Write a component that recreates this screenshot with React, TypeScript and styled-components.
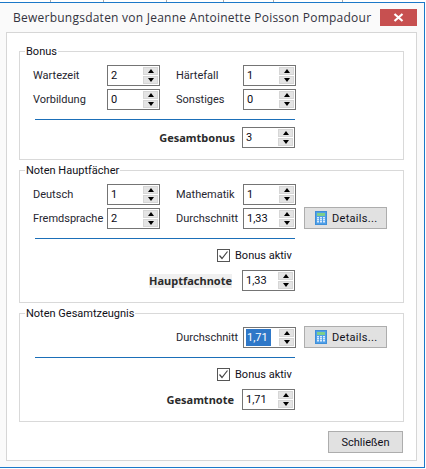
import React from "react";
import styled, { createGlobalStyle } from "styled-components";

const Global = createGlobalStyle`
  html, body { margin: 0; padding: 0; background: #fff; }
  body { font-family: Roboto, "Noto Sans", sans-serif; font-size: 11px; letter-spacing: 0; color: #262630; overflow: hidden; }
`;

const Page = styled.div`
  width: 426px;
  height: 469px;
  background: #fff;
`;

const TopStrip = styled.div`
  display: flex;
  height: 2px;
`;

const StripCell = styled.div<{ $w: number }>`
  width: ${(p) => p.$w}px;
  border-right: 1px solid #a8a8a8;
  box-sizing: border-box;
`;

const Win = styled.div`
  box-sizing: border-box;
  width: 425px;
  height: 466px;
  border-top: 1px solid #1b78c8;
  border-right: 1px solid #1b78c8;
  border-bottom: 1px solid #1b78c8;
  background: #fafafa;
`;

const TitleBar = styled.div`
  height: 29px;
  display: flex;
  align-items: flex-start;
  justify-content: space-between;
  padding: 6px 7px 0 13px;
  box-sizing: border-box;
`;

const Title = styled.div`
  font-family: "Open Sans", "Noto Sans", sans-serif;
  font-size: 12px;
  letter-spacing: 0.24px;
  line-height: 17px;
  color: #333340;
  white-space: nowrap;
`;

const CloseBtn = styled.div`
  flex: none;
  width: 37px;
  height: 17px;
  background: #c75050;
  display: flex;
  align-items: center;
  justify-content: center;
`;

const Panel = styled.div`
  box-sizing: border-box;
  width: 411px;
  height: 429px;
  margin-left: 6px;
  border: 1px solid #d6d6d6;
  background: #fff;
  padding: 18px 0 0 12px;
`;

const Group = styled.section`
  position: relative;
  box-sizing: border-box;
  width: 385px;
  border: 1px solid #d9d9d9;
  padding: 13px 0 11px;
  margin-bottom: 10px;
`;

const Legend = styled.div`
  position: absolute;
  left: 5px;
  top: -8px;
  padding: 0 1px;
  background: #fff;
  line-height: 15px;
  color: #101018;
`;

const Rows = styled.div`
  display: flex;
  flex-direction: column;
  gap: 3px;
`;

const Row = styled.div`
  display: flex;
  align-items: center;
  height: 21px;
  padding-left: 13px;
`;

const FieldLabel = styled.label<{ $w: number; $indent?: number }>`
  width: ${(p) => p.$w}px;
  margin-left: ${(p) => p.$indent ?? 0}px;
  white-space: nowrap;
  line-height: 15px;
`;

const SpinBox = styled.div`
  box-sizing: border-box;
  flex: none;
  width: 53px;
  height: 21px;
  border: 1px solid #747474;
  background: #fff;
  display: flex;
  justify-content: space-between;
  align-items: stretch;
  padding: 1px 1px 1px 2px;
  color: #0a0a14;
`;

const SpinText = styled.span<{ $selected?: boolean }>`
  align-self: center;
  line-height: 17px;
  padding: 0 ${(p) => (p.$selected ? "3px" : "1px")} 0 1px;
  background: ${(p) => (p.$selected ? "#2f78c8" : "transparent")};
  color: ${(p) => (p.$selected ? "#fff" : "inherit")};
`;

const SpinButtons = styled.div`
  display: flex;
  flex-direction: column;
  gap: 1px;
  width: 15px;
`;

const SpinButton = styled.div`
  flex: 1;
  box-sizing: border-box;
  background: #e4e4e4;
  border: 1px solid #d6d6d6;
  display: flex;
  align-items: center;
  justify-content: center;
`;

const Arrow = styled.span<{ $down?: boolean }>`
  width: 0;
  height: 0;
  border-left: 3.5px solid transparent;
  border-right: 3.5px solid transparent;
  ${(p) => (p.$down ? "border-top: 4px solid #000;" : "border-bottom: 4px solid #000;")}
`;

const DetailsButton = styled.button`
  box-sizing: border-box;
  width: 83px;
  height: 22px;
  margin-left: 8px;
  align-self: flex-end;
  border: 1px solid #adadad;
  background: #e1e1e1;
  font: inherit;
  letter-spacing: 0.3px;
  color: #10101a;
  padding: 0 0 0 10px;
  display: flex;
  align-items: center;
  gap: 5px;
`;

const Divider = styled.hr`
  width: 260px;
  height: 1px;
  border: 0;
  margin: 9px 0 0 15px;
  background: #1b6fb8;
`;

const SummaryRow = styled.div<{ $top: number }>`
  display: flex;
  align-items: center;
  justify-content: flex-end;
  width: 275px;
  height: 21px;
  margin-top: ${(p) => p.$top}px;
`;

const SummaryLabel = styled.span<{ $gap: number; $shade?: boolean }>`
  font-family: "Noto Sans", sans-serif;
  font-weight: 700;
  margin-right: ${(p) => p.$gap}px;
  line-height: 14px;
  color: #2b2b2b;
  background: ${(p) => (p.$shade ? "#f0f0f0" : "transparent")};
`;

const CheckRow = styled.div`
  display: flex;
  align-items: center;
  gap: 5px;
  height: 13px;
  margin-top: 10px;
  padding-left: 197px;
  line-height: 13px;
  color: #10101a;
`;

const CheckBox = styled.span`
  box-sizing: border-box;
  width: 13px;
  height: 13px;
  border: 1px solid #555;
  background: #fff;
  display: flex;
  align-items: center;
  justify-content: center;
`;

const Footer = styled.div`
  display: flex;
  justify-content: flex-end;
  width: 384px;
  margin-top: -1px;
`;

const CloseAction = styled.button`
  box-sizing: border-box;
  width: 75px;
  height: 22px;
  border: 1px solid #adadad;
  background: #e1e1e1;
  font: inherit;
  color: #10101a;
  padding: 0;
`;

const Calculator = () => (
  <svg width="12" height="14" viewBox="0 0 12 14">
    <rect x="0.5" y="0.5" width="11" height="13" fill="#4f9fe8" stroke="#3f8fd8" />
    <rect x="2" y="2" width="8" height="3" fill="#7fcf8a" />
    {[6, 8, 10].map((y) =>
      [2, 5, 8].map((x) => <rect key={`${x}-${y}`} x={x} y={y} width="2" height="1.5" fill="#dcecfb" />)
    )}
  </svg>
);

const Spin = ({ value, selected }: { value: string; selected?: boolean }) => (
  <SpinBox>
    <SpinText $selected={selected}>{value}</SpinText>
    <SpinButtons>
      <SpinButton><Arrow /></SpinButton>
      <SpinButton><Arrow $down /></SpinButton>
    </SpinButtons>
  </SpinBox>
);

const Details = () => (
  <DetailsButton>
    <Calculator />
    Details...
  </DetailsButton>
);

const BonusCheck = () => (
  <CheckRow>
    <CheckBox>
      <svg width="11" height="11" viewBox="0 0 11 11">
        <path d="M1.5 5.5 L4 8.5 L9.5 1.5" fill="none" stroke="#444" strokeWidth="1.2" />
      </svg>
    </CheckBox>
    Bonus aktiv
  </CheckRow>
);

export default function App() {
  return (
    <Page>
      <Global />
      <TopStrip>
        {[51, 53, 63, 57, 50, 69].map((w, i) => <StripCell key={i} $w={w} />)}
      </TopStrip>
      <Win>
        <TitleBar>
          <Title>Bewerbungsdaten von Jeanne Antoinette Poisson Pompadour</Title>
          <CloseBtn>
            <svg width="11" height="9" viewBox="0 0 11 9">
              <path d="M1.5 1 L9.5 8 M9.5 1 L1.5 8" stroke="#fff" strokeWidth="2.2" fill="none" />
            </svg>
          </CloseBtn>
        </TitleBar>
        <Panel>
          <Group>
            <Legend>Bonus</Legend>
            <Rows>
              <Row>
                <FieldLabel $w={74}>Wartezeit</FieldLabel>
                <Spin value="2" />
                <FieldLabel $w={67} $indent={16}>Härtefall</FieldLabel>
                <Spin value="1" />
              </Row>
              <Row>
                <FieldLabel $w={74}>Vorbildung</FieldLabel>
                <Spin value="0" />
                <FieldLabel $w={67} $indent={16}>Sonstiges</FieldLabel>
                <Spin value="0" />
              </Row>
            </Rows>
            <Divider />
            <SummaryRow $top={7}>
              <SummaryLabel $gap={7}>Gesamtbonus</SummaryLabel>
              <Spin value="3" />
            </SummaryRow>
          </Group>
          <Group>
            <Legend>Noten Hauptfächer</Legend>
            <Rows>
              <Row>
                <FieldLabel $w={74}>Deutsch</FieldLabel>
                <Spin value="1" />
                <FieldLabel $w={67} $indent={16}>Mathematik</FieldLabel>
                <Spin value="1" />
              </Row>
              <Row>
                <FieldLabel $w={74}>Fremdsprache</FieldLabel>
                <Spin value="2" />
                <FieldLabel $w={67} $indent={16}>Durchschnitt</FieldLabel>
                <Spin value="1,33" />
                <Details />
              </Row>
            </Rows>
            <Divider />
            <BonusCheck />
            <SummaryRow $top={8}>
              <SummaryLabel $gap={10} $shade>Hauptfachnote</SummaryLabel>
              <Spin value="1,33" />
            </SummaryRow>
          </Group>
          <Group>
            <Legend>Noten Gesamtzeugnis</Legend>
            <Row>
              <FieldLabel $w={67} $indent={143}>Durchschnitt</FieldLabel>
              <Spin value="1,71" selected />
              <Details />
            </Row>
            <Divider />
            <BonusCheck />
            <SummaryRow $top={8}>
              <SummaryLabel $gap={8}>Gesamtnote</SummaryLabel>
              <Spin value="1,71" />
            </SummaryRow>
          </Group>
          <Footer>
            <CloseAction>Schließen</CloseAction>
          </Footer>
        </Panel>
      </Win>
    </Page>
  );
}
